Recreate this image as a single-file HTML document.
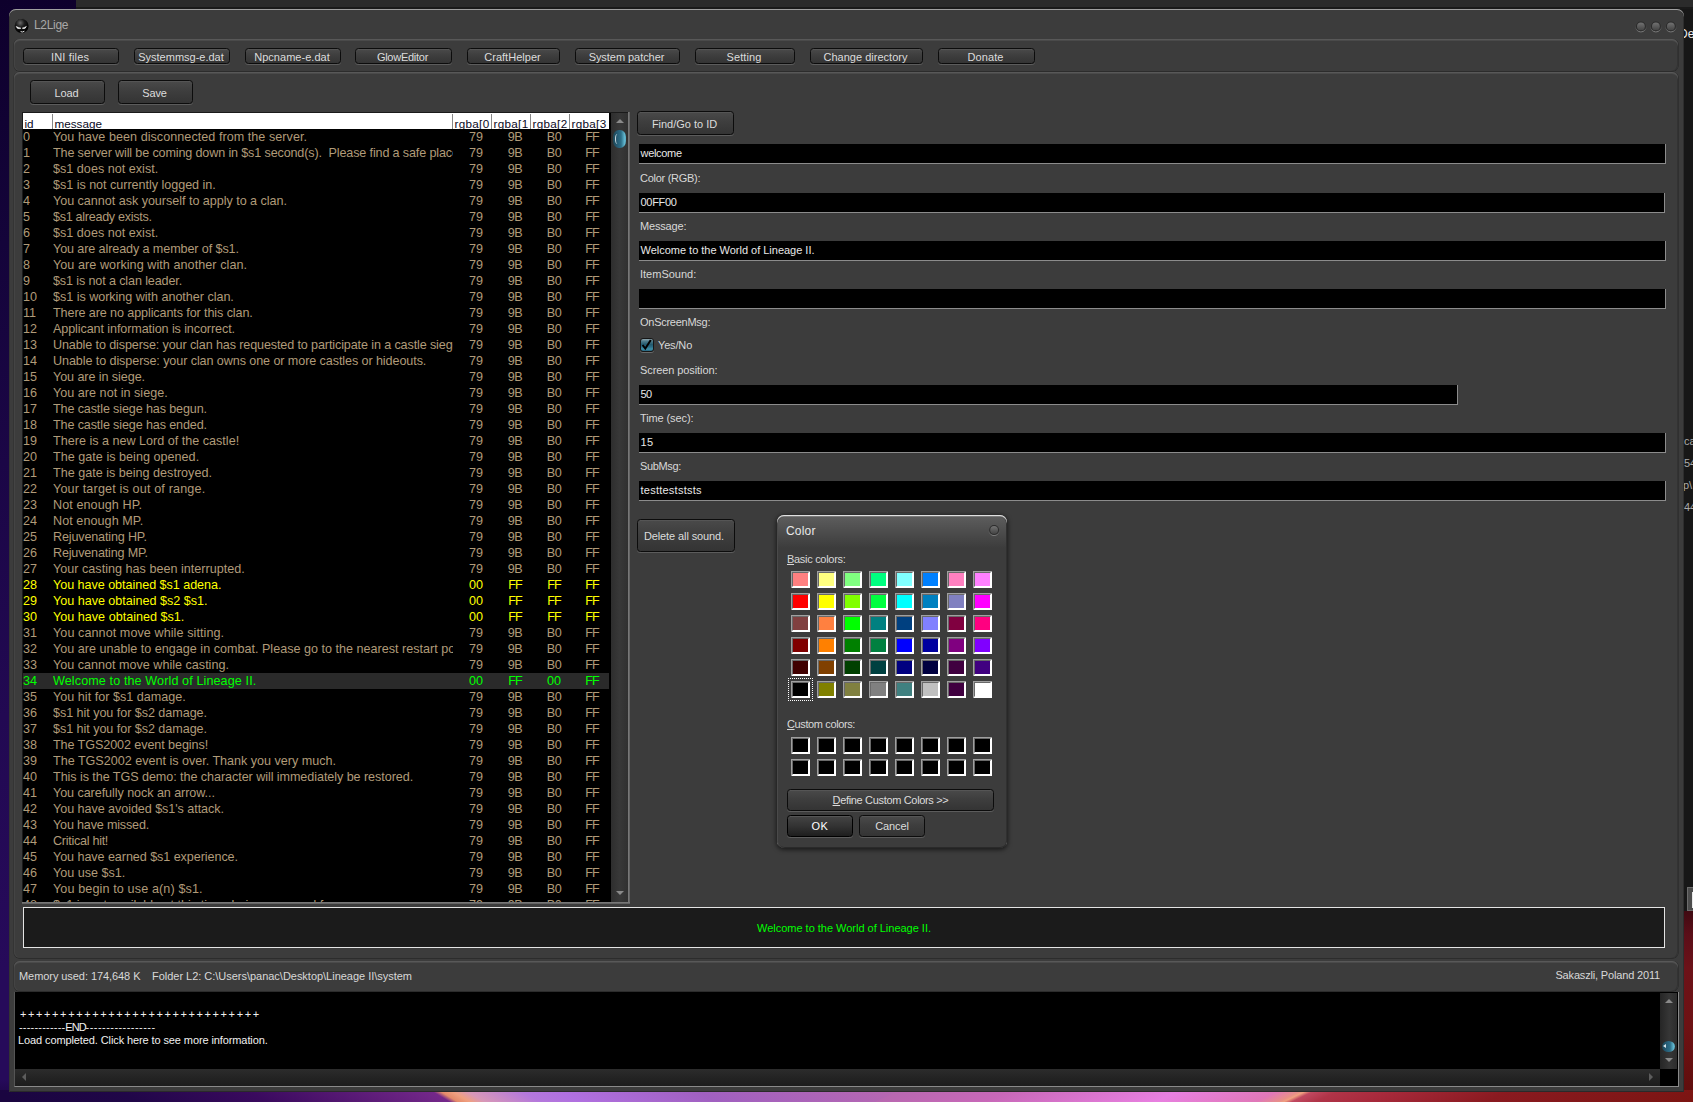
<!DOCTYPE html>
<html><head><meta charset="utf-8"><title>L2Lige</title>
<style>
*{box-sizing:border-box;margin:0;padding:0}
html,body{width:1693px;height:1102px;overflow:hidden}
body{font-family:"Liberation Sans",sans-serif;font-size:11px;color:#d8d8d8;position:relative;
background:linear-gradient(180deg,#0e002c 0%,#14043a 22%,#1b0646 42%,#220952 65%,#260a5a 88%,#260a5a 98%,#1a0540 100%)}
.abs{position:absolute}
#bgtop{position:absolute;left:76px;top:0;width:1617px;height:9px;background:#2b2b2b;border-bottom:2px solid #1a1a1a}
#bgright{position:absolute;left:1670px;top:9px;width:23px;height:1093px;background:#171717}
#bgright2{position:absolute;left:1683px;top:911px;width:10px;height:191px;background:linear-gradient(180deg,#400a12 0,#5a0e18 12%,#6c1218 30%,#6e1214 60%,#5e0d0c 100%)}
#bgbot{position:absolute;left:0;top:1090px;width:1693px;height:12px;overflow:hidden;background:#b868b0}
#bgbL{position:absolute;left:-40px;top:0;width:940px;height:12px;transform-origin:0 0;transform:skewX(59deg);
background:linear-gradient(90deg,#1a0540 0,#1a0540 37px,#200648 157px,#3a0a5e 287px,#74288a 470px,#e48a6a 478px,#f0a080 490px,#d898b8 505px,#b478dc 560px,#b070e0 600px,#a060c0 737px,#b868b0 940px)}
#bgbR{position:absolute;left:900px;top:0;width:840px;height:12px;transform-origin:0 0;transform:skewX(-64deg);
background:linear-gradient(90deg,#b868b0 0,#c868b8 110px,#e880e0 280px,#e078b8 380px,#e89088 403px,#f0a080 408px,#c04860 416px,#b03448 440px,#a82a3c 490px,#8a1a20 610px,#7a1410 840px)}
#win{position:absolute;left:9px;top:9px;width:1675px;height:1083px;background:#3c3c3c;border-radius:7px 7px 0 0;
box-shadow:inset 0 1px 0 #a0a0a0,inset 1px 0 0 #343434,inset -1px 0 0 #2e2e2e,inset 0 -1px 0 #2a2a2a}
#title{position:absolute;left:25px;top:9px;font-size:12px;line-height:15px;color:#a8a8a8;white-space:nowrap}
.panel{position:absolute;background:#3c3c3c;border-radius:6px;box-shadow:inset 0 1px 0 #585858,inset 0 2px 0 #4a4a4a,inset 1px 0 0 #444,inset -1px 0 0 #333,0 1px 0 #2c2c2c,-1px 0 0 #343434,1px 0 0 #303030}
.btn{position:absolute;border:1px solid #0c0c0c;border-radius:3.5px;background:linear-gradient(180deg,#4a4a4a 0,#3e3e3e 45%,#343434 100%);
box-shadow:0 1px 0 #5c5c5c,inset 0 1px 0 #555;color:#dcdcdc;text-align:center;white-space:nowrap}
.tb{top:39px;height:16px;line-height:16px;padding-right:2px}
.lab{position:absolute;left:631px;color:#d8d8d8;height:14px;line-height:14px}
.inp{position:absolute;left:630px;height:20px;background:#000;border-right:1px solid #8c8c8c;border-bottom:1px solid #8c8c8c;color:#e8e8e8;line-height:19px;padding-left:1.5px;white-space:nowrap}
/* list */
#list{position:absolute;left:13px;top:103px;width:606px;height:790px;background:#000;overflow:hidden;border-top:1px solid #1a1a1a;border-left:1px solid #1a1a1a}
#hdr{position:absolute;left:0;top:0;width:586px;height:16px;background:#fff;color:#0a0a1e;font-size:11.7px;overflow:hidden}
#hdr span{position:absolute;top:1px;height:15px;line-height:19px;border-left:1px solid #888;padding-left:1.5px;overflow:hidden;white-space:nowrap}
.r{position:relative;height:16px;line-height:17px;font-size:12.6px;color:#b09b79;white-space:nowrap;width:586px}
.r i,.r b,.r u{position:absolute;top:0;font-style:normal;font-weight:normal;text-decoration:none;overflow:hidden;height:16px}
.r i{left:0}
.r b{left:30px;width:400px}
.r u{width:40px;text-align:center}
.r u:nth-of-type(1){left:433px}.r u:nth-of-type(2){left:472px}.r u:nth-of-type(3){left:511px}.r u:nth-of-type(4){left:549px}
.r.y{color:#ffff00}
.r.g{color:#00ff00;background:#2a2a2a}
#hdr em{font-style:normal;letter-spacing:0.3px}
#rows{position:absolute;left:0;top:16px}
#vsb{position:absolute;left:588px;top:0;width:17px;height:790px;background:linear-gradient(90deg,#2e2e2e,#383838 50%,#303030)}
.arr{position:absolute;width:0;height:0;border:4px solid transparent}
.thumb{position:absolute;border-radius:6px/7px;background:linear-gradient(90deg,#1d4656 0,#27607a 40%,#2c6f88 62%,#5fb4cc 88%,#6cc4dc 94%,#3f8aa0 100%)}
.sw{position:absolute;width:19px;height:17px;border:2px solid;border-color:#696969 #fff #fff #696969;box-shadow:inset 0 0 0 0 #000;outline:0}
.sw::before{content:"";position:absolute;left:-2px;top:-2px;width:18px;height:16px;border-left:1px solid #a0a0a0;border-top:1px solid #a0a0a0}
#dlg{position:absolute;left:768px;top:506px;width:230px;height:333px;background:#3c3c3c;border-radius:7px;
box-shadow:inset 0 1px 0 #e0e0e0,inset 0 2px 0 #7a7a7a,inset 1px 0 0 #4a4a4a,inset -1px 0 0 #303030,inset 0 -1px 0 #2a2a2a,0 1px 4px 1px rgba(0,0,0,.55)}
#dlgt{position:absolute;left:1px;top:2px;right:1px;height:31px;border-radius:6px 6px 0 0;background:linear-gradient(180deg,#5c5c5c,#3c3c3c)}
.circ{position:absolute;width:12px;height:12px;border-radius:50%;background:radial-gradient(circle at 50% 35%,#585858,#444 70%,#3a3a3a);border:1px solid #2c2c2c;box-shadow:0 1px 0 #5a5a5a,0 -1px 0 #333}
</style></head><body>
<div id="bgtop"></div><div id="bgright"></div><div id="bgright2"></div><div id="bgbot"><div id="bgbL"></div><div id="bgbR"></div></div>
<div class="abs" style="left:1684px;top:27px;width:9px;height:16px;overflow:hidden"><div class="abs" style="left:-5px;top:0;color:#eee;font-size:12px;white-space:nowrap">De</div></div>
<div class="abs" style="left:1684px;top:435px;color:#aaa;font-size:11px;white-space:nowrap">ca</div>
<div class="abs" style="left:1684px;top:457px;color:#aaa;font-size:11px;white-space:nowrap">54</div>
<div class="abs" style="left:1683px;top:479px;color:#aaa;font-size:11px;white-space:nowrap">p\</div>
<div class="abs" style="left:1684px;top:501px;color:#aaa;font-size:11px;white-space:nowrap">44</div>
<div class="abs" style="left:1687px;top:887px;width:6px;height:24px;background:#4c4c4c;border:1px solid #6c6c6c;border-right:0"></div><div class="abs" style="left:1692px;top:892px;width:1px;height:16px;background:#e8e8e8"></div>
<div id="win">
 <svg class="abs" style="left:5px;top:8px" width="17" height="18" viewBox="0 0 17 18"><defs><radialGradient id="ig" cx="40%" cy="28%" r="65%"><stop offset="0" stop-color="#6a6a6a"/><stop offset="0.45" stop-color="#1e1e1e"/><stop offset="1" stop-color="#000"/></radialGradient></defs><path d="M4.6 2.4 L5.4 3.4 M9 1.8 L8.6 3" stroke="#222" stroke-width="1"/><circle cx="7.6" cy="9" r="7" fill="url(#ig)"/><path d="M2.2 9.4 Q3.2 12.6 7 11.2 Q4.6 10.6 2.2 9.4Z M12.4 9.4 Q11.2 12.6 8.2 11.2 Q10.4 10.6 12.4 9.4Z" fill="#fff" stroke="#fff" stroke-width="0.5"/><path d="M6.6 14.6 Q8.4 15.6 10.4 14.2" stroke="#eee" stroke-width="1" fill="none"/></svg>
 <div id="title"><span style="letter-spacing:-0.309px">L2Lige</span></div>
 <svg class="abs" style="left:1620px;top:8px" width="52" height="20" viewBox="0 0 52 20"><defs><linearGradient id="cb" x1="0" y1="0" x2="0" y2="1"><stop offset="0" stop-color="#727272"/><stop offset="1" stop-color="#444"/></linearGradient><linearGradient id="cr" x1="0" y1="0" x2="0" y2="1"><stop offset="0" stop-color="#3c3c3c" stop-opacity="0"/><stop offset="0.35" stop-color="#3c3c3c" stop-opacity="0"/><stop offset="1" stop-color="#808080"/></linearGradient><g id="cbtn"><circle r="5.5" fill="none" stroke="url(#cr)" stroke-width="1"/><circle r="4.9" fill="#2b2b2b"/><circle r="3.9" fill="url(#cb)"/></g></defs><use href="#cbtn" x="11.9" y="9.4"/><use href="#cbtn" x="26.9" y="9.4"/><use href="#cbtn" x="41.85" y="9.4"/></svg>

 <div class="panel" style="left:5px;top:30px;width:1664px;height:32px"></div>
 <div class="btn tb" style="left:14px;width:96px"><span style="letter-spacing:0.164px">INI files</span></div>
<div class="btn tb" style="left:125px;width:96px"><span style="letter-spacing:-0.007px">Systemmsg-e.dat</span></div>
<div class="btn tb" style="left:236px;width:96px"><span style="letter-spacing:0.023px">Npcname-e.dat</span></div>
<div class="btn tb" style="left:346px;width:97px"><span style="letter-spacing:-0.255px">GlowEditor</span></div>
<div class="btn tb" style="left:458px;width:93px"><span style="letter-spacing:0.025px">CraftHelper</span></div>
<div class="btn tb" style="left:566px;width:105px"><span style="letter-spacing:-0.052px">System patcher</span></div>
<div class="btn tb" style="left:686px;width:100px"><span style="letter-spacing:0.125px">Setting</span></div>
<div class="btn tb" style="left:801px;width:113px"><span style="letter-spacing:0.015px">Change directory</span></div>
<div class="btn tb" style="left:929px;width:97px"><span style="letter-spacing:0.103px">Donate</span></div>
 <div class="panel" style="left:5px;top:63px;width:1664px;height:886px"></div>
 <div class="btn" style="left:21px;top:71px;width:75px;height:24px;line-height:24px;padding-right:2px"><span style="letter-spacing:-0.078px">Load</span></div>
 <div class="btn" style="left:109px;top:71px;width:75px;height:24px;line-height:24px;padding-right:2px"><span style="letter-spacing:-0.109px">Save</span></div>

 <div id="list">
  <div id="rows">
<div class="r"><i>0</i><b style="letter-spacing:0.041px">You have been disconnected from the server.</b><u>79</u><u style="letter-spacing:-0.5px">9B</u><u style="letter-spacing:-0.5px">B0</u><u style="letter-spacing:-1.0px">FF</u></div>
<div class="r"><i>1</i><b style="letter-spacing:-0.145px">The server will be coming down in $s1 second(s). &nbsp;Please find a safe place to exit.</b><u>79</u><u style="letter-spacing:-0.5px">9B</u><u style="letter-spacing:-0.5px">B0</u><u style="letter-spacing:-1.0px">FF</u></div>
<div class="r"><i>2</i><b style="letter-spacing:0.013px">$s1 does not exist.</b><u>79</u><u style="letter-spacing:-0.5px">9B</u><u style="letter-spacing:-0.5px">B0</u><u style="letter-spacing:-1.0px">FF</u></div>
<div class="r"><i>3</i><b style="letter-spacing:-0.035px">$s1 is not currently logged in.</b><u>79</u><u style="letter-spacing:-0.5px">9B</u><u style="letter-spacing:-0.5px">B0</u><u style="letter-spacing:-1.0px">FF</u></div>
<div class="r"><i>4</i><b style="letter-spacing:-0.035px">You cannot ask yourself to apply to a clan.</b><u>79</u><u style="letter-spacing:-0.5px">9B</u><u style="letter-spacing:-0.5px">B0</u><u style="letter-spacing:-1.0px">FF</u></div>
<div class="r"><i>5</i><b style="letter-spacing:-0.295px">$s1 already exists.</b><u>79</u><u style="letter-spacing:-0.5px">9B</u><u style="letter-spacing:-0.5px">B0</u><u style="letter-spacing:-1.0px">FF</u></div>
<div class="r"><i>6</i><b style="letter-spacing:0.013px">$s1 does not exist.</b><u>79</u><u style="letter-spacing:-0.5px">9B</u><u style="letter-spacing:-0.5px">B0</u><u style="letter-spacing:-1.0px">FF</u></div>
<div class="r"><i>7</i><b style="letter-spacing:-0.105px">You are already a member of $s1.</b><u>79</u><u style="letter-spacing:-0.5px">9B</u><u style="letter-spacing:-0.5px">B0</u><u style="letter-spacing:-1.0px">FF</u></div>
<div class="r"><i>8</i><b style="letter-spacing:0.059px">You are working with another clan.</b><u>79</u><u style="letter-spacing:-0.5px">9B</u><u style="letter-spacing:-0.5px">B0</u><u style="letter-spacing:-1.0px">FF</u></div>
<div class="r"><i>9</i><b style="letter-spacing:-0.132px">$s1 is not a clan leader.</b><u>79</u><u style="letter-spacing:-0.5px">9B</u><u style="letter-spacing:-0.5px">B0</u><u style="letter-spacing:-1.0px">FF</u></div>
<div class="r"><i>10</i><b style="letter-spacing:-0.036px">$s1 is working with another clan.</b><u>79</u><u style="letter-spacing:-0.5px">9B</u><u style="letter-spacing:-0.5px">B0</u><u style="letter-spacing:-1.0px">FF</u></div>
<div class="r"><i>11</i><b style="letter-spacing:-0.105px">There are no applicants for this clan.</b><u>79</u><u style="letter-spacing:-0.5px">9B</u><u style="letter-spacing:-0.5px">B0</u><u style="letter-spacing:-1.0px">FF</u></div>
<div class="r"><i>12</i><b style="letter-spacing:-0.101px">Applicant information is incorrect.</b><u>79</u><u style="letter-spacing:-0.5px">9B</u><u style="letter-spacing:-0.5px">B0</u><u style="letter-spacing:-1.0px">FF</u></div>
<div class="r"><i>13</i><b style="letter-spacing:-0.124px">Unable to disperse: your clan has requested to participate in a castle siege.</b><u>79</u><u style="letter-spacing:-0.5px">9B</u><u style="letter-spacing:-0.5px">B0</u><u style="letter-spacing:-1.0px">FF</u></div>
<div class="r"><i>14</i><b style="letter-spacing:-0.092px">Unable to disperse: your clan owns one or more castles or hideouts.</b><u>79</u><u style="letter-spacing:-0.5px">9B</u><u style="letter-spacing:-0.5px">B0</u><u style="letter-spacing:-1.0px">FF</u></div>
<div class="r"><i>15</i><b style="letter-spacing:-0.082px">You are in siege.</b><u>79</u><u style="letter-spacing:-0.5px">9B</u><u style="letter-spacing:-0.5px">B0</u><u style="letter-spacing:-1.0px">FF</u></div>
<div class="r"><i>16</i><b style="letter-spacing:0.019px">You are not in siege.</b><u>79</u><u style="letter-spacing:-0.5px">9B</u><u style="letter-spacing:-0.5px">B0</u><u style="letter-spacing:-1.0px">FF</u></div>
<div class="r"><i>17</i><b style="letter-spacing:-0.134px">The castle siege has begun.</b><u>79</u><u style="letter-spacing:-0.5px">9B</u><u style="letter-spacing:-0.5px">B0</u><u style="letter-spacing:-1.0px">FF</u></div>
<div class="r"><i>18</i><b style="letter-spacing:-0.134px">The castle siege has ended.</b><u>79</u><u style="letter-spacing:-0.5px">9B</u><u style="letter-spacing:-0.5px">B0</u><u style="letter-spacing:-1.0px">FF</u></div>
<div class="r"><i>19</i><b style="letter-spacing:-0.002px">There is a new Lord of the castle!</b><u>79</u><u style="letter-spacing:-0.5px">9B</u><u style="letter-spacing:-0.5px">B0</u><u style="letter-spacing:-1.0px">FF</u></div>
<div class="r"><i>20</i><b style="letter-spacing:0.021px">The gate is being opened.</b><u>79</u><u style="letter-spacing:-0.5px">9B</u><u style="letter-spacing:-0.5px">B0</u><u style="letter-spacing:-1.0px">FF</u></div>
<div class="r"><i>21</i><b style="letter-spacing:0.0px">The gate is being destroyed.</b><u>79</u><u style="letter-spacing:-0.5px">9B</u><u style="letter-spacing:-0.5px">B0</u><u style="letter-spacing:-1.0px">FF</u></div>
<div class="r"><i>22</i><b style="letter-spacing:0.155px">Your target is out of range.</b><u>79</u><u style="letter-spacing:-0.5px">9B</u><u style="letter-spacing:-0.5px">B0</u><u style="letter-spacing:-1.0px">FF</u></div>
<div class="r"><i>23</i><b style="letter-spacing:0.081px">Not enough HP.</b><u>79</u><u style="letter-spacing:-0.5px">9B</u><u style="letter-spacing:-0.5px">B0</u><u style="letter-spacing:-1.0px">FF</u></div>
<div class="r"><i>24</i><b style="letter-spacing:0.058px">Not enough MP.</b><u>79</u><u style="letter-spacing:-0.5px">9B</u><u style="letter-spacing:-0.5px">B0</u><u style="letter-spacing:-1.0px">FF</u></div>
<div class="r"><i>25</i><b style="letter-spacing:-0.163px">Rejuvenating HP.</b><u>79</u><u style="letter-spacing:-0.5px">9B</u><u style="letter-spacing:-0.5px">B0</u><u style="letter-spacing:-1.0px">FF</u></div>
<div class="r"><i>26</i><b style="letter-spacing:-0.182px">Rejuvenating MP.</b><u>79</u><u style="letter-spacing:-0.5px">9B</u><u style="letter-spacing:-0.5px">B0</u><u style="letter-spacing:-1.0px">FF</u></div>
<div class="r"><i>27</i><b style="letter-spacing:0.014px">Your casting has been interrupted.</b><u>79</u><u style="letter-spacing:-0.5px">9B</u><u style="letter-spacing:-0.5px">B0</u><u style="letter-spacing:-1.0px">FF</u></div>
<div class="r y"><i>28</i><b style="letter-spacing:-0.046px">You have obtained $s1 adena.</b><u>00</u><u style="letter-spacing:-1.0px">FF</u><u style="letter-spacing:-1.0px">FF</u><u style="letter-spacing:-1.0px">FF</u></div>
<div class="r y"><i>29</i><b style="letter-spacing:-0.022px">You have obtained $s2 $s1.</b><u>00</u><u style="letter-spacing:-1.0px">FF</u><u style="letter-spacing:-1.0px">FF</u><u style="letter-spacing:-1.0px">FF</u></div>
<div class="r y"><i>30</i><b style="letter-spacing:0.008px">You have obtained $s1.</b><u>00</u><u style="letter-spacing:-1.0px">FF</u><u style="letter-spacing:-1.0px">FF</u><u style="letter-spacing:-1.0px">FF</u></div>
<div class="r"><i>31</i><b style="letter-spacing:0.072px">You cannot move while sitting.</b><u>79</u><u style="letter-spacing:-0.5px">9B</u><u style="letter-spacing:-0.5px">B0</u><u style="letter-spacing:-1.0px">FF</u></div>
<div class="r"><i>32</i><b style="letter-spacing:0.002px">You are unable to engage in combat. Please go to the nearest restart point.</b><u>79</u><u style="letter-spacing:-0.5px">9B</u><u style="letter-spacing:-0.5px">B0</u><u style="letter-spacing:-1.0px">FF</u></div>
<div class="r"><i>33</i><b style="letter-spacing:-0.001px">You cannot move while casting.</b><u>79</u><u style="letter-spacing:-0.5px">9B</u><u style="letter-spacing:-0.5px">B0</u><u style="letter-spacing:-1.0px">FF</u></div>
<div class="r g"><i>34</i><b style="letter-spacing:0.103px">Welcome to the World of Lineage II.</b><u>00</u><u style="letter-spacing:-1.0px">FF</u><u>00</u><u style="letter-spacing:-1.0px">FF</u></div>
<div class="r"><i>35</i><b style="letter-spacing:0.013px">You hit for $s1 damage.</b><u>79</u><u style="letter-spacing:-0.5px">9B</u><u style="letter-spacing:-0.5px">B0</u><u style="letter-spacing:-1.0px">FF</u></div>
<div class="r"><i>36</i><b style="letter-spacing:-0.053px">$s1 hit you for $s2 damage.</b><u>79</u><u style="letter-spacing:-0.5px">9B</u><u style="letter-spacing:-0.5px">B0</u><u style="letter-spacing:-1.0px">FF</u></div>
<div class="r"><i>37</i><b style="letter-spacing:-0.053px">$s1 hit you for $s2 damage.</b><u>79</u><u style="letter-spacing:-0.5px">9B</u><u style="letter-spacing:-0.5px">B0</u><u style="letter-spacing:-1.0px">FF</u></div>
<div class="r"><i>38</i><b style="letter-spacing:-0.089px">The TGS2002 event begins!</b><u>79</u><u style="letter-spacing:-0.5px">9B</u><u style="letter-spacing:-0.5px">B0</u><u style="letter-spacing:-1.0px">FF</u></div>
<div class="r"><i>39</i><b style="letter-spacing:-0.017px">The TGS2002 event is over. Thank you very much.</b><u>79</u><u style="letter-spacing:-0.5px">9B</u><u style="letter-spacing:-0.5px">B0</u><u style="letter-spacing:-1.0px">FF</u></div>
<div class="r"><i>40</i><b style="letter-spacing:-0.067px">This is the TGS demo: the character will immediately be restored.</b><u>79</u><u style="letter-spacing:-0.5px">9B</u><u style="letter-spacing:-0.5px">B0</u><u style="letter-spacing:-1.0px">FF</u></div>
<div class="r"><i>41</i><b style="letter-spacing:-0.072px">You carefully nock an arrow...</b><u>79</u><u style="letter-spacing:-0.5px">9B</u><u style="letter-spacing:-0.5px">B0</u><u style="letter-spacing:-1.0px">FF</u></div>
<div class="r"><i>42</i><b style="letter-spacing:-0.06px">You have avoided $s1's attack.</b><u>79</u><u style="letter-spacing:-0.5px">9B</u><u style="letter-spacing:-0.5px">B0</u><u style="letter-spacing:-1.0px">FF</u></div>
<div class="r"><i>43</i><b style="letter-spacing:-0.18px">You have missed.</b><u>79</u><u style="letter-spacing:-0.5px">9B</u><u style="letter-spacing:-0.5px">B0</u><u style="letter-spacing:-1.0px">FF</u></div>
<div class="r"><i>44</i><b style="letter-spacing:-0.286px">Critical hit!</b><u>79</u><u style="letter-spacing:-0.5px">9B</u><u style="letter-spacing:-0.5px">B0</u><u style="letter-spacing:-1.0px">FF</u></div>
<div class="r"><i>45</i><b style="letter-spacing:-0.071px">You have earned $s1 experience.</b><u>79</u><u style="letter-spacing:-0.5px">9B</u><u style="letter-spacing:-0.5px">B0</u><u style="letter-spacing:-1.0px">FF</u></div>
<div class="r"><i>46</i><b style="letter-spacing:-0.001px">You use $s1.</b><u>79</u><u style="letter-spacing:-0.5px">9B</u><u style="letter-spacing:-0.5px">B0</u><u style="letter-spacing:-1.0px">FF</u></div>
<div class="r"><i>47</i><b style="letter-spacing:0.119px">You begin to use a(n) $s1.</b><u>79</u><u style="letter-spacing:-0.5px">9B</u><u style="letter-spacing:-0.5px">B0</u><u style="letter-spacing:-1.0px">FF</u></div>
<div class="r"><i>48</i><b style="letter-spacing:0px">$s1 is not available at this time: being prepared for reuse.</b><u>79</u><u style="letter-spacing:-0.5px">9B</u><u style="letter-spacing:-0.5px">B0</u><u style="letter-spacing:-1.0px">FF</u></div>
  </div>
  <div id="hdr"><span style="left:0;width:29px;border-left:0">id</span><span style="left:29px;width:400px">message</span><span style="left:429px;width:39px" ><em>rgba[0</em></span><span style="left:468px;width:39px" ><em>rgba[1</em></span><span style="left:507px;width:39px" ><em>rgba[2</em></span><span style="left:546px;width:40px" ><em>rgba[3</em></span></div>
  <div id="vsb">
   <div class="arr" style="left:5px;top:6px;border-top:0;border-bottom:4px solid #8a8a8a"></div>
   <div class="thumb" style="left:2px;top:17px;width:13px;height:18px"></div>
   <div class="abs" style="left:4px;top:21px;width:5px;height:10px;border-left:1px solid #c8d8e0;border-radius:50%"></div>
   <div class="arr" style="left:5px;top:778px;border-bottom:0;border-top:4px solid #8a8a8a"></div>
  </div>
 </div>
 <div class="abs" style="left:619px;top:103px;width:2px;height:792px;background:linear-gradient(90deg,#808080,#5c5c5c)"></div>
 <div class="abs" style="left:13px;top:893px;width:608px;height:2px;background:linear-gradient(180deg,#808080,#5c5c5c)"></div>

 <div class="btn" style="left:628px;top:102px;width:97px;height:24px;line-height:24px;padding-right:2px"><span style="letter-spacing:-0.014px">Find/Go to ID</span></div>
 <div class="inp" style="top:135px;width:1027px"><span style="letter-spacing:-0.318px">welcome</span></div>
<div class="lab" style="top:162px"><span style="letter-spacing:-0.278px">Color (RGB):</span></div>
<div class="inp" style="top:184px;width:1026px"><span style="letter-spacing:-0.284px">00FF00</span></div>
<div class="lab" style="top:210px"><span style="letter-spacing:-0.172px">Message:</span></div>
<div class="inp" style="top:232px;width:1027px"><span style="letter-spacing:-0.014px">Welcome to the World of Lineage II.</span></div>
<div class="lab" style="top:258px"><span style="letter-spacing:-0.002px">ItemSound:</span></div>
<div class="inp" style="top:280px;width:1027px"></div>
<div class="lab" style="top:354px"><span style="letter-spacing:-0.093px">Screen position:</span></div>
<div class="inp" style="top:376px;width:819px"><span style="letter-spacing:-0.5px">50</span></div>
<div class="lab" style="top:402px"><span style="letter-spacing:-0.109px">Time (sec):</span></div>
<div class="inp" style="top:424px;width:1027px"><span style="letter-spacing:0.35px">15</span></div>
<div class="lab" style="top:450px"><span style="letter-spacing:-0.362px">SubMsg:</span></div>
<div class="inp" style="top:472px;width:1027px"><span style="letter-spacing:0.243px">testtestststs</span></div>
<div class="lab" style="top:306px"><span style="letter-spacing:-0.261px">OnScreenMsg:</span></div>
 <div class="abs" style="left:631px;top:329px;width:14px;height:14px;border:1px solid #161616;border-radius:3px;background:linear-gradient(180deg,#90a6ae 0,#4f7d8c 18%,#235a6e 45%,#2a6c84 65%,#3e90a8 85%,#26607a 100%);box-shadow:0 1px 0 #6a6a6a"></div>
 <svg class="abs" style="left:631px;top:329px" width="14" height="14" viewBox="0 0 14 14"><path d="M2.6 7 L5.3 10.6 L10.8 2" stroke="#000" stroke-width="2" fill="none"/></svg>
 <div class="lab" style="left:649px;top:329px"><span style="letter-spacing:-0.163px">Yes/No</span></div>
 <div class="btn" style="left:628px;top:510px;width:98px;height:33px;line-height:32px;padding-right:4px"><span style="letter-spacing:-0.106px">Delete all sound.</span></div>

 <div class="abs" style="left:14px;top:898px;width:1642px;height:41px;background:#1b1b1b;border:1px solid #e4e4e4;color:#00ff00;text-align:center;line-height:40px"><span style="letter-spacing:-0.014px">Welcome to the World of Lineage II.</span></div>

 <div class="panel" style="left:5px;top:952px;width:1664px;height:30px"></div>
 <div class="abs" style="left:10px;top:961px;white-space:nowrap"><span style="letter-spacing:-0.067px">Memory used: 174,648 K</span></div>
 <div class="abs" style="left:143px;top:961px;white-space:nowrap"><span style="letter-spacing:-0.022px">Folder L2: C:\Users\panac\Desktop\Lineage II\system</span></div>
 <div class="abs" style="left:1400px;width:1251px;top:960px;white-space:nowrap;text-align:right;width:251px"><span style="letter-spacing:-0.165px">Sakaszli, Poland 2011</span></div>

 <div class="abs" id="log" style="left:5px;top:983px;width:1665px;height:95px;background:#000;border-right:1px solid #8a8a8a;border-bottom:1px solid #8a8a8a;border-left:1px solid #555">
  <div class="abs" style="left:3px;top:16px;color:#f0f0f0;line-height:13px;white-space:nowrap">
   <div style="letter-spacing:1.6px;margin-left:2px">++++++++++++++++++++++++++++++</div>
   <div style="margin-left:1px"><span style="letter-spacing:0.2px">------------</span><span style="letter-spacing:-1px">END</span><span style="letter-spacing:0.45px">-----------------</span></div>
   <div><span style="letter-spacing:-0.104px">Load completed. Click here to see more information.</span></div>
  </div>
  <div class="abs" style="left:1645px;top:1px;width:17px;height:76px;background:linear-gradient(90deg,#262626,#363636 55%,#2c2c2c)">
   <div class="arr" style="left:5px;top:6px;border-top:0;border-bottom:4px solid #8a8a8a"></div>
   <div class="thumb" style="left:2px;top:48px;width:13px;height:11px;border-radius:50%"></div>
   <div class="abs" style="left:3px;top:51px;width:0;height:0;border:2.5px solid transparent;border-left:0;border-right:3px solid #d8e4ea"></div>
   <div class="arr" style="left:5px;top:65px;border-bottom:0;border-top:4px solid #8a8a8a"></div>
  </div>
  <div class="abs" style="left:0;top:77px;width:1645px;height:17px;background:linear-gradient(180deg,#2c2c2c,#222 60%,#1c1c1c)">
   <div class="arr" style="left:7px;top:4px;border-left:0;border-right:4px solid #5c5c5c"></div>
   <div class="arr" style="left:1634px;top:4px;border-right:0;border-left:4px solid #5c5c5c"></div>
  </div>
 </div>

 <div id="dlg">
  <div id="dlgt"></div>
  <div class="abs" style="left:1px;top:0;width:229px;height:333px">
  <div class="abs" style="left:8px;top:9px;font-size:12px;line-height:15px;color:#e8e8e8"><span style="letter-spacing:0.203px">Color</span></div>
  <svg class="abs" style="left:209px;top:8px" width="14" height="14" viewBox="0 0 14 14"><use href="#cbtn" x="7.1" y="7"/></svg>
  <div class="abs" style="left:9px;top:38px;white-space:nowrap"><span style="letter-spacing:-0.3px"><span style="text-decoration:underline">B</span>asic colors:</span></div>
  <div class="abs" style="left:9px;top:203px;white-space:nowrap"><span style="letter-spacing:-0.38px"><span style="text-decoration:underline">C</span>ustom colors:</span></div>
  <div class="sw" style="left:13px;top:56px;background:#FF8080"></div>
<div class="sw" style="left:39px;top:56px;background:#FFFF80"></div>
<div class="sw" style="left:65px;top:56px;background:#80FF80"></div>
<div class="sw" style="left:91px;top:56px;background:#00FF80"></div>
<div class="sw" style="left:117px;top:56px;background:#80FFFF"></div>
<div class="sw" style="left:143px;top:56px;background:#0080FF"></div>
<div class="sw" style="left:169px;top:56px;background:#FF80C0"></div>
<div class="sw" style="left:195px;top:56px;background:#FF80FF"></div>
<div class="sw" style="left:13px;top:78px;background:#FF0000"></div>
<div class="sw" style="left:39px;top:78px;background:#FFFF00"></div>
<div class="sw" style="left:65px;top:78px;background:#80FF00"></div>
<div class="sw" style="left:91px;top:78px;background:#00FF40"></div>
<div class="sw" style="left:117px;top:78px;background:#00FFFF"></div>
<div class="sw" style="left:143px;top:78px;background:#0080C0"></div>
<div class="sw" style="left:169px;top:78px;background:#8080C0"></div>
<div class="sw" style="left:195px;top:78px;background:#FF00FF"></div>
<div class="sw" style="left:13px;top:100px;background:#804040"></div>
<div class="sw" style="left:39px;top:100px;background:#FF8040"></div>
<div class="sw" style="left:65px;top:100px;background:#00FF00"></div>
<div class="sw" style="left:91px;top:100px;background:#008080"></div>
<div class="sw" style="left:117px;top:100px;background:#004080"></div>
<div class="sw" style="left:143px;top:100px;background:#8080FF"></div>
<div class="sw" style="left:169px;top:100px;background:#800040"></div>
<div class="sw" style="left:195px;top:100px;background:#FF0080"></div>
<div class="sw" style="left:13px;top:122px;background:#800000"></div>
<div class="sw" style="left:39px;top:122px;background:#FF8000"></div>
<div class="sw" style="left:65px;top:122px;background:#008000"></div>
<div class="sw" style="left:91px;top:122px;background:#008040"></div>
<div class="sw" style="left:117px;top:122px;background:#0000FF"></div>
<div class="sw" style="left:143px;top:122px;background:#0000A0"></div>
<div class="sw" style="left:169px;top:122px;background:#800080"></div>
<div class="sw" style="left:195px;top:122px;background:#8000FF"></div>
<div class="sw" style="left:13px;top:144px;background:#400000"></div>
<div class="sw" style="left:39px;top:144px;background:#804000"></div>
<div class="sw" style="left:65px;top:144px;background:#004000"></div>
<div class="sw" style="left:91px;top:144px;background:#004040"></div>
<div class="sw" style="left:117px;top:144px;background:#000080"></div>
<div class="sw" style="left:143px;top:144px;background:#000040"></div>
<div class="sw" style="left:169px;top:144px;background:#400040"></div>
<div class="sw" style="left:195px;top:144px;background:#400080"></div>
<div class="sw" style="left:13px;top:166px;background:#000000"></div>
<div class="sw" style="left:39px;top:166px;background:#808000"></div>
<div class="sw" style="left:65px;top:166px;background:#808040"></div>
<div class="sw" style="left:91px;top:166px;background:#808080"></div>
<div class="sw" style="left:117px;top:166px;background:#408080"></div>
<div class="sw" style="left:143px;top:166px;background:#C0C0C0"></div>
<div class="sw" style="left:169px;top:166px;background:#400040"></div>
<div class="sw" style="left:195px;top:166px;background:#FFFFFF"></div>
<div class="sw" style="left:13px;top:222px;background:#000"></div>
<div class="sw" style="left:39px;top:222px;background:#000"></div>
<div class="sw" style="left:65px;top:222px;background:#000"></div>
<div class="sw" style="left:91px;top:222px;background:#000"></div>
<div class="sw" style="left:117px;top:222px;background:#000"></div>
<div class="sw" style="left:143px;top:222px;background:#000"></div>
<div class="sw" style="left:169px;top:222px;background:#000"></div>
<div class="sw" style="left:195px;top:222px;background:#000"></div>
<div class="sw" style="left:13px;top:244px;background:#000"></div>
<div class="sw" style="left:39px;top:244px;background:#000"></div>
<div class="sw" style="left:65px;top:244px;background:#000"></div>
<div class="sw" style="left:91px;top:244px;background:#000"></div>
<div class="sw" style="left:117px;top:244px;background:#000"></div>
<div class="sw" style="left:143px;top:244px;background:#000"></div>
<div class="sw" style="left:169px;top:244px;background:#000"></div>
<div class="sw" style="left:195px;top:244px;background:#000"></div>
  <div class="abs" style="left:10px;top:163px;width:25px;height:23px;border:1px dotted #fff"></div>
  <div class="btn" style="left:9px;top:274px;width:207px;height:22px;line-height:21px"><span style="letter-spacing:-0.33px"><span style="text-decoration:underline">D</span>efine Custom Colors &gt;&gt;</span></div>
  <div class="btn" style="left:9px;top:300px;width:66px;height:22px;line-height:21px;color:#fff;border-color:#000;background:linear-gradient(180deg,#444 0,#333 50%,#1e1e1e 100%)"><span style="letter-spacing:0.494px">OK</span></div>
  <div class="btn" style="left:81px;top:300px;width:66px;height:22px;line-height:21px"><span style="letter-spacing:-0.09px">Cancel</span></div>
  </div>
 </div>
</div>
</body></html>
